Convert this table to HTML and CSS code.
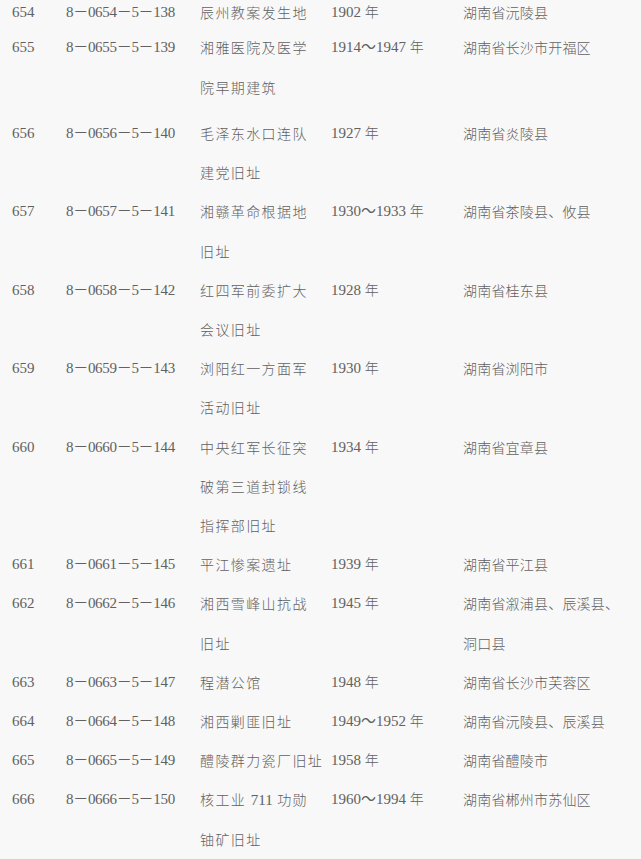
FILE: index.html
```html
<!DOCTYPE html>
<html lang="zh-CN">
<head>
<meta charset="utf-8">
<title>全国重点文物保护单位</title>
<link rel="stylesheet" href="styles.css">
</head>
<body>
<div class="list">
  <div class="row first">
    <div class="num">654</div><div class="code">8－0654－5－138</div><div class="name">辰州教案发生地</div><div class="year">1902 <span class="cjk">年</span></div><div class="place">湖南省沅陵县</div>
  </div>
  <div class="row second">
    <div class="num">655</div><div class="code">8－0655－5－139</div><div class="name">湘雅医院及医学<br>院早期建筑</div><div class="year">1914～1947 <span class="cjk">年</span></div><div class="place">湖南省长沙市开福区</div>
  </div>
  <div class="row">
    <div class="num">656</div><div class="code">8－0656－5－140</div><div class="name">毛泽东水口连队<br>建党旧址</div><div class="year">1927 <span class="cjk">年</span></div><div class="place">湖南省炎陵县</div>
  </div>
  <div class="row">
    <div class="num">657</div><div class="code">8－0657－5－141</div><div class="name">湘赣革命根据地<br>旧址</div><div class="year">1930～1933 <span class="cjk">年</span></div><div class="place">湖南省茶陵县、攸县</div>
  </div>
  <div class="row">
    <div class="num">658</div><div class="code">8－0658－5－142</div><div class="name">红四军前委扩大<br>会议旧址</div><div class="year">1928 <span class="cjk">年</span></div><div class="place">湖南省桂东县</div>
  </div>
  <div class="row">
    <div class="num">659</div><div class="code">8－0659－5－143</div><div class="name">浏阳红一方面军<br>活动旧址</div><div class="year">1930 <span class="cjk">年</span></div><div class="place">湖南省浏阳市</div>
  </div>
  <div class="row">
    <div class="num">660</div><div class="code">8－0660－5－144</div><div class="name">中央红军长征突<br>破第三道封锁线<br>指挥部旧址</div><div class="year">1934 <span class="cjk">年</span></div><div class="place">湖南省宜章县</div>
  </div>
  <div class="row">
    <div class="num">661</div><div class="code">8－0661－5－145</div><div class="name">平江惨案遗址</div><div class="year">1939 <span class="cjk">年</span></div><div class="place">湖南省平江县</div>
  </div>
  <div class="row">
    <div class="num">662</div><div class="code">8－0662－5－146</div><div class="name">湘西雪峰山抗战<br>旧址</div><div class="year">1945 <span class="cjk">年</span></div><div class="place">湖南省溆浦县、辰溪县、<br>洞口县</div>
  </div>
  <div class="row">
    <div class="num">663</div><div class="code">8－0663－5－147</div><div class="name">程潜公馆</div><div class="year">1948 <span class="cjk">年</span></div><div class="place">湖南省长沙市芙蓉区</div>
  </div>
  <div class="row">
    <div class="num">664</div><div class="code">8－0664－5－148</div><div class="name">湘西剿匪旧址</div><div class="year">1949～1952 <span class="cjk">年</span></div><div class="place">湖南省沅陵县、辰溪县</div>
  </div>
  <div class="row">
    <div class="num">665</div><div class="code">8－0665－5－149</div><div class="name">醴陵群力瓷厂旧址</div><div class="year">1958 <span class="cjk">年</span></div><div class="place">湖南省醴陵市</div>
  </div>
  <div class="row">
    <div class="num">666</div><div class="code">8－0666－5－150</div><div class="name">核工业 <span class="digits">711</span> 功勋<br>铀矿旧址</div><div class="year">1960～1994 <span class="cjk">年</span></div><div class="place">湖南省郴州市苏仙区</div>
  </div>
</div>
</body>
</html>
```

FILE: styles.css
```css
html, body {
  margin: 0;
  padding: 0;
  background: #f8f8f8;
}

body {
  width: 641px;
  height: 859px;
  overflow: hidden;
  color: #616161;
  font-family: "Liberation Serif", "Noto Sans CJK SC", serif;
  font-size: 15px;
}

.list {
  margin-top: -7px;
  padding-left: 12px;
}

.row {
  display: grid;
  grid-template-columns: 54px 134px 131px 132px 1fr;
  line-height: 39.2px;
  white-space: nowrap;
}

.row.first {
  margin-bottom: -5px;
}

.row.second {
  line-height: 40px;
  margin-bottom: 6.8px;
}

.num, .code, .year, .digits {
  font-family: "Liberation Serif", "Noto Sans CJK SC", serif;
  font-size: 15px;
}

.code {
  letter-spacing: -0.3px;
}

.name, .place, .cjk {
  font-family: "Noto Sans CJK SC", "Liberation Serif", sans-serif;
  font-size: 14px;
  font-weight: 300;
}

.cjk, .digits {
  line-height: 1;
}

.name {
  letter-spacing: 1.4px;
}

.name .digits {
  letter-spacing: 0;
}

.place {
  letter-spacing: 0.2px;
}
```
